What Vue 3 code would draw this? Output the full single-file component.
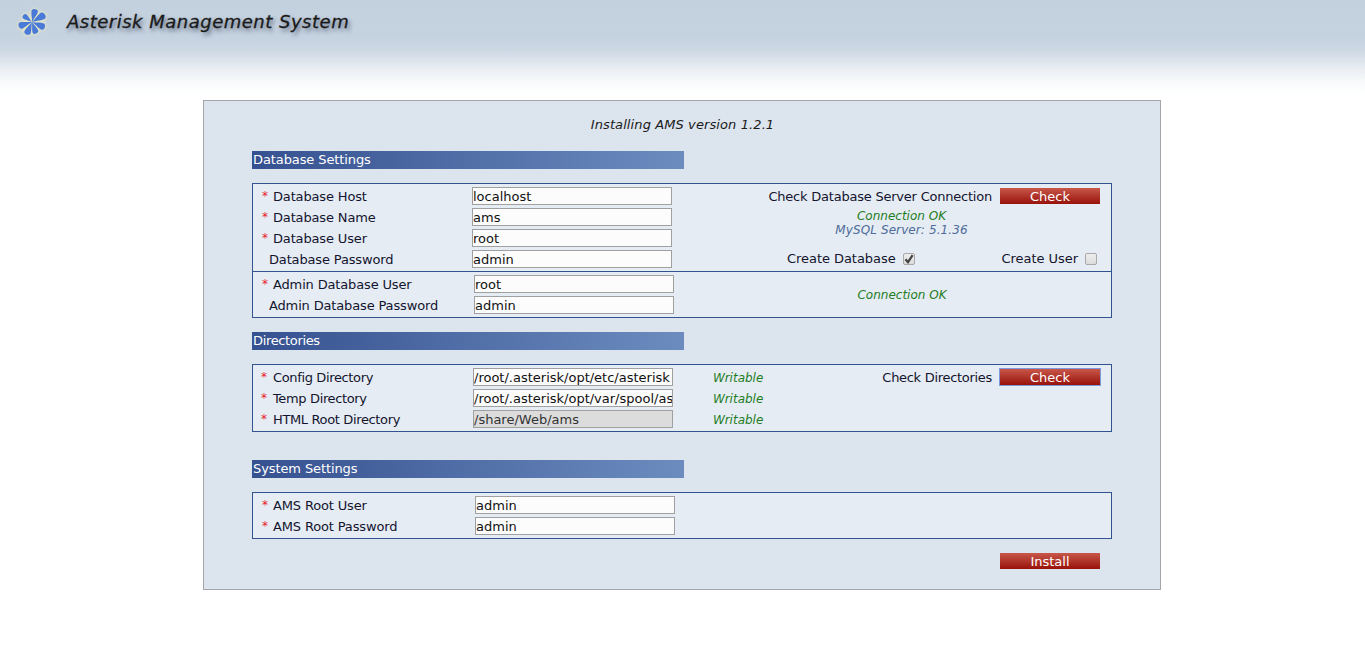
<script setup>
const dbRows = [
  { label: 'Database Host', value: 'localhost', req: true },
  { label: 'Database Name', value: 'ams', req: true },
  { label: 'Database User', value: 'root', req: true },
  { label: 'Database Password', value: 'admin', req: false }
]
const adminRows = [
  { label: 'Admin Database User', value: 'root', req: true },
  { label: 'Admin Database Password', value: 'admin', req: false }
]
const dirRows = [
  { label: 'Config Directory', value: '/root/.asterisk/opt/etc/asterisk', disabled: false },
  { label: 'Temp Directory', value: '/root/.asterisk/opt/var/spool/asterisk', disabled: false },
  { label: 'HTML Root Directory', value: '/share/Web/ams', disabled: true }
]
const sysRows = [
  { label: 'AMS Root User', value: 'admin' },
  { label: 'AMS Root Password', value: 'admin' }
]
const petals = [
  { a: 14, s: 1.02 },
  { a: 60, s: 1.14 },
  { a: 113, s: 1.06 },
  { a: 160, s: 0.94 },
  { a: 203, s: 1.04 },
  { a: 252, s: 1.06 },
  { a: 307, s: 0.84 }
]
</script>

<template>
  <div class="page">
    <header class="top">
      <svg class="logo" width="34" height="34" viewBox="-17 -17 34 34">
        <path
          v-for="p in petals"
          :key="p.a"
          :transform="`rotate(${p.a}) scale(${p.s})`"
          d="M0 0 C-0.8 -4 -3.2 -8 -3.1 -10.8 C-3 -13.6 2.8 -14 3.2 -11.2 C3.5 -8.6 0.9 -4 0 0Z"
          fill="#4a7ad8"
        />
      </svg>
      <span class="brand">Asterisk Management System</span>
    </header>

    <main class="panel">
      <p class="title">Installing AMS version 1.2.1</p>

      <h2 class="heading">Database Settings</h2>
      <section class="box">
        <div class="part">
          <div class="fields">
            <div v-for="r in dbRows" :key="r.label" class="row">
              <span class="label" :class="{ plain: !r.req }"><i v-if="r.req" class="star">*</i>{{ r.label }}</span>
              <input class="field" :value="r.value" />
            </div>
          </div>
          <div class="side">
            <div class="action">
              <span class="act-db">Check Database Server Connection</span>
              <button class="btn">Check</button>
            </div>
            <div class="status">
              <span class="ok">Connection OK</span>
              <span class="ver">MySQL Server: 5.1.36</span>
            </div>
            <div class="opts">
              <span class="opt">Create Database
                <span class="check">
                  <svg width="10" height="10" viewBox="0 0 10 10"><path d="M1.5 5.2 L4 8.2 L8.6 1.2" fill="none" stroke="#444" stroke-width="2.2" /></svg>
                </span>
              </span>
              <span class="opt">Create User <span class="check"></span></span>
            </div>
          </div>
        </div>
        <div class="part ruled">
          <div class="fields wide">
            <div v-for="r in adminRows" :key="r.label" class="row">
              <span class="label" :class="{ plain: !r.req }"><i v-if="r.req" class="star">*</i>{{ r.label }}</span>
              <input class="field" :value="r.value" />
            </div>
          </div>
          <div class="side admin">
            <span class="ok">Connection OK</span>
          </div>
        </div>
      </section>

      <h2 class="heading dirs">Directories</h2>
      <section class="box">
        <div class="part">
          <div class="fields mid">
            <div v-for="r in dirRows" :key="r.label" class="row">
              <span class="label"><i class="star">*</i>{{ r.label }}</span>
              <input class="field" :class="{ off: r.disabled }" :value="r.value" />
              <span class="ok writable">Writable</span>
            </div>
          </div>
          <div class="side">
            <div class="action">
              <span class="act-dir">Check Directories</span>
              <button class="btn focus">Check</button>
            </div>
          </div>
        </div>
      </section>

      <h2 class="heading sys">System Settings</h2>
      <section class="box">
        <div class="part">
          <div class="fields far">
            <div v-for="r in sysRows" :key="r.label" class="row">
              <span class="label"><i class="star">*</i>{{ r.label }}</span>
              <input class="field" :value="r.value" />
            </div>
          </div>
        </div>
      </section>

      <div class="foot">
        <button class="btn">Install</button>
      </div>
    </main>
  </div>
</template>

<style scoped>
.page {
  min-height: 667px;
  background: #fff;
  font-family: "DejaVu Sans", Verdana, sans-serif;
  font-size: 13px;
  color: #14142e;
}
.top {
  height: 100px;
  box-sizing: border-box;
  padding: 5px 0 0 15px;
  display: flex;
  align-items: flex-start;
  background: linear-gradient(to bottom, #c3d1df 0, #c5d2e0 37px, #ccd8e4 50px, #dce4ec 60px, #ebeff4 70px, #f6f8fa 80px, #ffffff 94px);
}
.logo {
  flex: none;
  filter: drop-shadow(0 0 2px #f6f2b4);
}
.brand {
  margin: 6px 0 0 18px;
  font-size: 18px;
  font-style: italic;
  line-height: 22px;
  color: #1a1a1a;
  letter-spacing: 0.5px;
  -webkit-text-stroke: 0.3px #1a1a1a;
  text-shadow: 2px 3px 4px rgba(50, 60, 80, 0.75);
}
.panel {
  width: 958px;
  height: 490px;
  box-sizing: border-box;
  margin: 0 0 0 203px;
  padding: 0 48px;
  background: #dce4ee;
  border: 1px solid #a3a6aa;
}
.title {
  margin: 0;
  padding: 16px 0 0 1px;
  height: 50px;
  box-sizing: border-box;
  text-align: center;
  font-style: italic;
  line-height: 16px;
  letter-spacing: 0.1px;
  color: #1a1a1a;
}
.heading {
  width: 432px;
  height: 18px;
  box-sizing: border-box;
  margin: 0 0 14px;
  padding-left: 1px;
  font-size: 13px;
  font-weight: normal;
  line-height: 18px;
  letter-spacing: -0.1px;
  color: #fff;
  background: linear-gradient(to right, #365190, #6c8cbf);
}
.heading.dirs {
  margin-top: 14px;
  letter-spacing: -0.35px;
}
.heading.sys {
  margin-top: 28px;
}
.box {
  width: 860px;
  box-sizing: border-box;
  border: 1px solid #33538f;
  background: #e5ecf4;
}
.part {
  display: flex;
  padding-top: 3px;
}
.part.ruled {
  border-top: 1px solid #33538f;
}
.fields {
  flex: none;
}
.row {
  height: 21px;
  display: flex;
  align-items: flex-start;
}
.label {
  width: 219px;
  flex: none;
  box-sizing: border-box;
  padding: 1px 0 0 9px;
  line-height: 18px;
  letter-spacing: -0.15px;
  white-space: nowrap;
}
.wide .label {
  width: 221px;
}
.mid .label {
  width: 220px;
  padding-left: 8px;
  letter-spacing: -0.36px;
}
.mid .star {
  width: 12px;
}
.far .label {
  width: 222px;
}
.label.plain {
  padding-left: 16px;
}
.star {
  display: inline-block;
  width: 11px;
  font-size: 12px;
  line-height: 12px;
  vertical-align: 1px;
  font-style: normal;
  color: #e8202a;
  letter-spacing: 0;
}
.field {
  width: 200px;
  height: 18px;
  box-sizing: border-box;
  margin: 0;
  padding: 0;
  border: 1px solid #a0a0a0;
  border-radius: 0;
  outline: 0;
  background: #fcfcfc;
  font: inherit;
  color: #111;
}
.field.off {
  background: #dcdcdc;
  color: #333;
}
.writable {
  margin-left: 40px;
  padding-top: 1px;
  line-height: 18px;
}
.ok {
  font-size: 12px;
  font-style: italic;
  color: #1f7d1f;
}
.ver {
  font-size: 12px;
  font-style: italic;
  letter-spacing: 0.1px;
  color: #4f6c9a;
}
.side {
  flex: 1;
  min-width: 0;
}
.action {
  height: 21px;
  padding-right: 11px;
  display: flex;
  justify-content: flex-end;
  align-items: flex-start;
  gap: 8px;
  line-height: 18px;
  white-space: nowrap;
}
.action > span {
  padding-top: 1px;
}
.act-db {
  letter-spacing: -0.22px;
}
.act-dir {
  letter-spacing: -0.3px;
}
.btn {
  width: 100px;
  height: 16px;
  box-sizing: border-box;
  margin-top: 1px;
  padding: 2px 0 0;
  border: 0;
  background: linear-gradient(to bottom, #c8574a, #98120a);
  color: #fff;
  font: inherit;
  line-height: 14px;
}
.btn.focus {
  box-shadow: 0 0 0 1px #7b9bdc;
}
.status {
  height: 42px;
  padding: 1px 0 0 20px;
  box-sizing: border-box;
  display: flex;
  flex-direction: column;
  align-items: center;
  line-height: 14px;
}
.opts {
  height: 21px;
  box-sizing: border-box;
  padding: 0 14px 0 115px;
  display: flex;
  justify-content: space-between;
  align-items: flex-start;
  line-height: 18px;
  letter-spacing: -0.05px;
}
.opt {
  display: flex;
  align-items: center;
  gap: 7px;
  white-space: nowrap;
}
.check {
  width: 12px;
  height: 12px;
  box-sizing: border-box;
  border: 1px solid #a8a8a8;
  border-radius: 2px;
  background: linear-gradient(to bottom, #ededed, #dcdcdc);
  display: flex;
  align-items: center;
  justify-content: center;
}
.admin {
  text-align: center;
  padding: 13px 0 0 19px;
  line-height: 14px;
}
.foot {
  margin-top: 14px;
  width: 848px;
  display: flex;
  justify-content: flex-end;
}
.foot .btn {
  margin-top: 0;
}
</style>

<style>
html, body { margin: 0; background: #fff; }
</style>
